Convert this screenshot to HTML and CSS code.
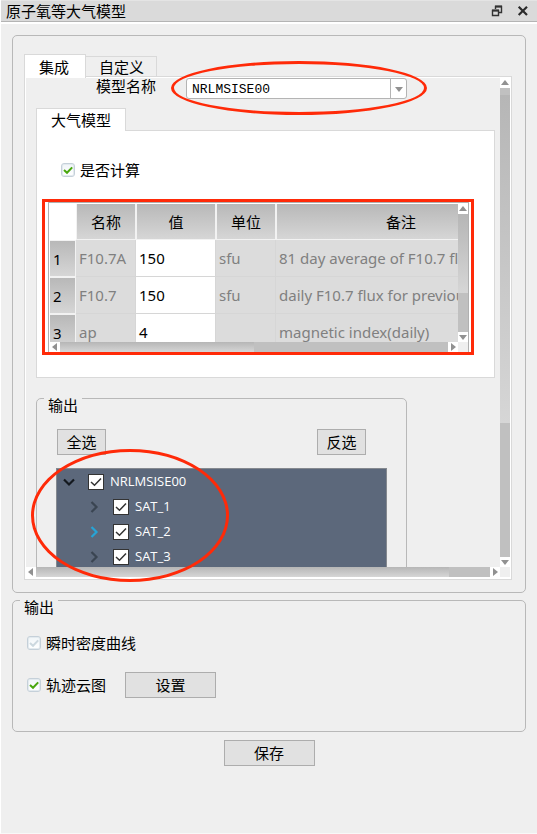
FILE: index.html
```html
<!DOCTYPE html>
<html lang="zh-CN">
<head>
<meta charset="utf-8">
<meta name="viewport" content="width=device-width, initial-scale=1">
<title>原子氧等大气模型</title>
<link rel="stylesheet" href="styles.css">
</head>
<body>
<svg class="defs" aria-hidden="true">
  <symbol id="tick" viewBox="0 0 14 14"><path d="M3 7 L6 9.8 L11.2 4.4" fill="none" stroke="currentColor" stroke-width="2"/></symbol>
  <symbol id="tree-tick" viewBox="0 0 16 16"><path d="M3 8 L6.5 11.3 L13 4.6" fill="none" stroke="currentColor" stroke-width="1.5"/></symbol>
  <symbol id="up" viewBox="0 0 10 10"><path d="M5 2 L9 7 H1 Z" fill="#919191"/></symbol>
  <symbol id="down" viewBox="0 0 10 10"><path d="M5 8 L9 3 H1 Z" fill="#919191"/></symbol>
  <symbol id="left" viewBox="0 0 10 10"><path d="M2 5 L7 1 V9 Z" fill="#919191"/></symbol>
  <symbol id="right" viewBox="0 0 10 10"><path d="M8 5 L3 1 V9 Z" fill="#919191"/></symbol>
  <symbol id="chevron" viewBox="0 0 12 12"><path d="M3.5 1 L8.5 6 L3.5 11" fill="none" stroke="currentColor" stroke-width="2.2"/></symbol>
  <symbol id="chevron-open" viewBox="0 0 12 12"><path d="M1 3.5 L6 8.5 L11 3.5" fill="none" stroke="currentColor" stroke-width="2.2"/></symbol>
</svg>

<header class="titlebar">
  <h1>原子氧等大气模型</h1>
  <button type="button" class="win-btn" aria-label="还原">
    <svg width="12" height="12" viewBox="0 0 12 12"><path d="M4.5 4V1.5H10.5V7.5H8" fill="none" stroke="#333" stroke-width="1.4"/><path d="M4 1.5H11" stroke="#333" stroke-width="2"/><path d="M1.5 5.5H7.5V10.5H1.5Z" fill="#dadada" stroke="#333" stroke-width="1.4"/><path d="M1 5.5H8" stroke="#333" stroke-width="2"/></svg>
  </button>
  <button type="button" class="win-btn" aria-label="关闭">
    <svg width="12" height="12" viewBox="0 0 12 12"><path d="M1.7 1.7 L10 10 M10 1.7 L1.7 10" stroke="#2b2b2b" stroke-width="2.2"/></svg>
  </button>
</header>

<main class="main">
  <section class="model">
    <div class="tabs" role="tablist">
      <button type="button" class="tab tab-current" role="tab" aria-selected="true">集成</button>
      <button type="button" class="tab" role="tab" aria-selected="false">自定义</button>
    </div>
    <div class="pane scroll-grid">
      <div class="viewport">
        <div class="model-row">
          <label for="model-name">模型名称</label>
          <div class="combo">
            <select id="model-name"><option>NRLMSISE00</option></select>
            <span class="combo-arrow"><svg width="10" height="10"><use href="#down"/></svg></span>
          </div>
        </div>

        <div class="tabs inner-tabs" role="tablist">
          <button type="button" class="tab tab-inner" role="tab" aria-selected="true">大气模型</button>
        </div>
        <div class="inner-pane">
          <div class="check-row">
            <span class="check"><input type="checkbox" id="calc" checked><svg><use href="#tick"/></svg></span>
            <label for="calc">是否计算</label>
          </div>
          <div class="table-frame scroll-grid">
            <div class="table-view">
              <table>
                <colgroup><col class="c-index"><col class="c-name"><col class="c-value"><col class="c-unit"><col class="c-note"></colgroup>
                <thead>
                  <tr><td></td><th scope="col">名称</th><th scope="col">值</th><th scope="col">单位</th><th scope="col">备注</th></tr>
                </thead>
                <tbody>
                  <tr><th scope="row">1</th><td>F10.7A</td><td class="value">150</td><td>sfu</td><td>81 day average of F10.7 flux</td></tr>
                  <tr><th scope="row">2</th><td>F10.7</td><td class="value">150</td><td>sfu</td><td>daily F10.7 flux for previous day</td></tr>
                  <tr><th scope="row">3</th><td>ap</td><td class="value">4</td><td></td><td>magnetic index(daily)</td></tr>
                </tbody>
              </table>
            </div>
            <div class="vbar" aria-hidden="true"><svg><use href="#up"/></svg><span class="vtrack"><i class="thumb table-vthumb"></i></span><svg><use href="#down"/></svg></div>
            <div class="hbar" aria-hidden="true"><svg><use href="#left"/></svg><span class="htrack"><i class="thumb table-hthumb"></i></span><svg><use href="#right"/></svg></div>
            <div class="corner"></div>
            <div class="mark-box"></div>
          </div>
        </div>

        <fieldset class="group output-tree">
          <legend>输出</legend>
          <div class="select-buttons">
            <button type="button" class="btn btn-small">全选</button>
            <button type="button" class="btn btn-small">反选</button>
          </div>
          <ul class="tree">
            <li class="root"><svg class="chev"><use href="#chevron-open"/></svg><span class="tree-check"><input type="checkbox" id="root" checked><svg><use href="#tree-tick"/></svg></span><label for="root">NRLMSISE00</label></li>
            <li><svg class="chev"><use href="#chevron"/></svg><span class="tree-check"><input type="checkbox" id="sat1" checked><svg><use href="#tree-tick"/></svg></span><label for="sat1">SAT_1</label></li>
            <li class="hover"><svg class="chev"><use href="#chevron"/></svg><span class="tree-check"><input type="checkbox" id="sat2" checked><svg><use href="#tree-tick"/></svg></span><label for="sat2">SAT_2</label></li>
            <li><svg class="chev"><use href="#chevron"/></svg><span class="tree-check"><input type="checkbox" id="sat3" checked><svg><use href="#tree-tick"/></svg></span><label for="sat3">SAT_3</label></li>
          </ul>
        </fieldset>
      </div>
      <div class="vbar" aria-hidden="true"><svg><use href="#up"/></svg><span class="vtrack"><i class="thumb pane-vthumb"></i></span><svg><use href="#down"/></svg></div>
      <div class="hbar" aria-hidden="true"><svg><use href="#left"/></svg><span class="htrack"><i class="thumb pane-hthumb"></i></span><svg><use href="#right"/></svg></div>
      <div class="corner"></div>
    </div>
    <div class="mark-oval mark-combo"></div>
    <div class="mark-oval mark-tree"></div>
  </section>

  <fieldset class="group output">
    <legend>输出</legend>
    <div class="check-row output-row">
      <span class="check check-off"><input type="checkbox" id="density" disabled checked><svg><use href="#tick"/></svg></span>
      <label for="density">瞬时密度曲线</label>
    </div>
    <div class="check-row output-row">
      <span class="check"><input type="checkbox" id="cloud" checked><svg><use href="#tick"/></svg></span>
      <label for="cloud">轨迹云图</label>
      <button type="button" class="btn btn-set">设置</button>
    </div>
  </fieldset>

  <button type="button" class="btn btn-save">保存</button>
</main>
</body>
</html>
```

FILE: styles.css
```css
* { box-sizing: border-box; }

body {
  margin: 0;
  min-height: 100vh;
  background: #efefef;
  border-left: 1px solid #fff;
  border-bottom: 1px solid #f8f8f8;
  color: #000;
  font: 15px/20px "Noto Sans CJK SC", sans-serif;
}

button, select, input { margin: 0; font: inherit; color: inherit; }

.defs { position: absolute; width: 0; height: 0; }

/* Title bar */
.titlebar {
  display: flex;
  align-items: center;
  gap: 14px;
  height: 24px;
  padding: 0 8px 0 5px;
  background: #dadada;
  border-bottom: 2px solid #fff;
  box-shadow: inset 0 -1px #b4b4b4, inset 0 1px #e4e4e4;
}
.titlebar h1 { flex: 1; margin: 0; font-size: 15px; font-weight: 400; }
.win-btn { display: flex; padding: 0; border: 0; background: none; }

.main { display: flex; flex-direction: column; padding: 11px 11px 0; }

/* Group frames */
.model {
  position: relative;
  padding: 18px 13px 12px 11px;
  border: 1px solid #b8b8b8;
  border-radius: 5px;
}
.group {
  min-width: 0;
  margin: 0;
  border: 1px solid #b8b8b8;
  border-radius: 5px;
}
/* Top padding drops the caption below the frame line */
.group legend { padding: 14px 4px 0; line-height: 16px; }

/* Tabs */
.tabs { display: flex; align-items: flex-end; height: 22px; }
.tab {
  position: relative;
  height: 20px;
  padding: 0 12px 0 13px;
  border: 1px solid #d9d9d9;
  border-bottom: 0;
  border-left: 0;
  background: #efefef;
  line-height: 18px;
}
.tab-current {
  height: 24px;
  margin-bottom: -2px;
  padding: 0 16px 0 14px;
  border-left: 1px solid #d9d9d9;
  background: #fff;
  line-height: 20px;
}
.inner-tabs { margin: 9px 0 0 10px; }
.tab-inner {
  height: 23px;
  margin-bottom: -1px;
  padding: 0 14px;
  border-left: 1px solid #d9d9d9;
  background: #fff;
  line-height: 20px;
}

/* Scroll areas: content, vertical bar, horizontal bar */
.scroll-grid { display: grid; grid-template-columns: minmax(0, 1fr) 10px; }
.pane { padding: 1px 1px 2px; border: 1px solid #d9d9d9; background: #fff; }
.viewport { height: 489px; overflow: hidden; background: #efefef; }
.vbar, .hbar { display: flex; background: #fff; }
.vbar { flex-direction: column; }
.vbar svg, .hbar svg { flex: none; width: 10px; height: 10px; }
.vtrack, .htrack { display: flex; flex: 1; background: #c0c0c0; }
.vtrack { flex-direction: column; }
.thumb { display: block; background: linear-gradient(#b6b6b6, #d6d6d6); }
.pane-vthumb { height: 335px; border-top: 7px solid #c0c0c0; }
.pane-hthumb { width: 91%; }
.table-vthumb { height: 79px; }
.table-hthumb { width: 50%; }
.corner { background: #efefef; }

/* Model picker */
.model-row { display: flex; align-items: flex-start; gap: 30px; padding-left: 70px; }
.model-row label { line-height: 15px; }
.combo { display: grid; grid-template-columns: 204px 17px; height: 21px; }
.combo select {
  grid-area: 1 / 1 / 2 / 3;
  height: 21px;
  padding: 2px 5px 0;
  border: 1px solid #b4b4b4;
  border-radius: 3px;
  background: #fff;
  appearance: none;
  font: 13px/17px "Liberation Mono", monospace;
}
.combo-arrow {
  display: flex;
  align-items: center;
  justify-content: center;
  grid-area: 1 / 2;
  border-left: 1px solid #b4b4b4;
  margin: 1px 0;
  pointer-events: none;
}

.inner-pane {
  margin: 0 5px 0 10px;
  padding: 29px 25px 24px 11px;
  border: 1px solid #d9d9d9;
  background: #fff;
}

/* Check boxes */
.check-row { display: flex; align-items: center; gap: 5px; height: 20px; }
.inner-pane .check-row { margin-left: 13px; }
.check, .tree-check { display: grid; flex: none; }
.check > *, .tree-check > * { grid-area: 1 / 1; }
.check svg, .tree-check svg { position: relative; pointer-events: none; }
.check input, .check svg { width: 14px; height: 14px; color: #49a70e; }
.check input {
  appearance: none;
  border: 1px solid #c5d0d9;
  border-radius: 3px;
  background: linear-gradient(#f0f5f8, #fff);
  box-shadow: inset 0 0 0 1px #e3eaef;
}
.check-off svg { color: #ccd8df; }

/* Parameter table */
.table-frame {
  position: relative;
  margin-top: 22px;
  padding: 1px 0 0 1px;
  border: 1px solid #b0b0b0;
  background: #fff;
}
.table-view { height: 138px; overflow: hidden; }
table {
  width: 476px;
  table-layout: fixed;
  border-collapse: separate;
  border-spacing: 0;
  font-family: "Noto Sans", "Noto Sans CJK SC", sans-serif;
}
.c-index { width: 26px; }
.c-name, .c-unit { width: 60px; }
.c-value { width: 80px; }
.c-note { width: 250px; }
th {
  padding: 0;
  border: 0 solid #f2f2f2;
  background: linear-gradient(#b8b8b8, #d6d6d6);
  font-weight: 400;
}
thead th { height: 36px; border-width: 0 1px 1px; }
tbody th { height: 37px; padding-left: 3px; border-width: 1px 1px 1px 0; text-align: left; }
td {
  padding: 0 0 0 3px;
  border: solid #d6d6d6;
  border-width: 0 1px 1px 0;
  background: #dcdcdc;
  color: #808080;
  white-space: nowrap;
}
thead td { border: 0; background: #fff; }
td.value { background: #fff; color: #000; }

/* Output tree */
.output-tree { width: 371px; margin: 5px 0 0 10px; padding: 16px 19px 20px; }
.output-tree legend { margin-left: -12px; }
.select-buttons { display: flex; justify-content: space-between; padding: 0 21px 0 1px; }
.tree {
  min-height: 180px;
  margin: 13px 0 0;
  padding: 0;
  border: 1px solid #85898f;
  background: #5c687b;
  color: #fff;
  font: 13px/25px "Open Sans", sans-serif;
  list-style: none;
}
.tree li { display: flex; align-items: center; height: 25px; padding-left: 31px; }
.tree .root { padding-left: 6px; }
.chev { flex: none; width: 12px; height: 12px; margin-right: 13px; color: #3a4552; }
.root .chev { color: #14191f; }
.hover .chev { color: #27a4d6; }
.tree-check { margin-right: 6px; color: #333; }
.tree-check input, .tree-check svg { width: 16px; height: 16px; }
.tree-check input { appearance: none; border: 1px solid #333; background: #fff; }

/* Buttons */
.btn {
  height: 26px;
  padding: 0;
  border: 1px solid #adadad;
  background: #e1e1e1;
  line-height: 24px;
}
.btn-small { width: 49px; }
.btn-set { width: 91px; margin-left: 14px; }
.btn-save { align-self: center; width: 91px; margin-top: 8px; }

.output {
  display: flex;
  flex-direction: column;
  gap: 16px;
  margin-top: -8px;
  padding: 15px 14px 33px;
}
.output legend { margin-left: -7px; }
.output-row { height: 26px; }

/* Red call-outs drawn over the form */
.mark-box, .mark-oval { position: absolute; border: 3px solid #ff2a08; pointer-events: none; }
.mark-box { inset: -4px -6px -3px -7px; }
.mark-oval { border-radius: 50%; }
.mark-combo { left: 158px; top: 25px; width: 256px; height: 54px; }
.mark-tree { left: 18px; top: 413px; width: 198px; height: 133px; }
```
